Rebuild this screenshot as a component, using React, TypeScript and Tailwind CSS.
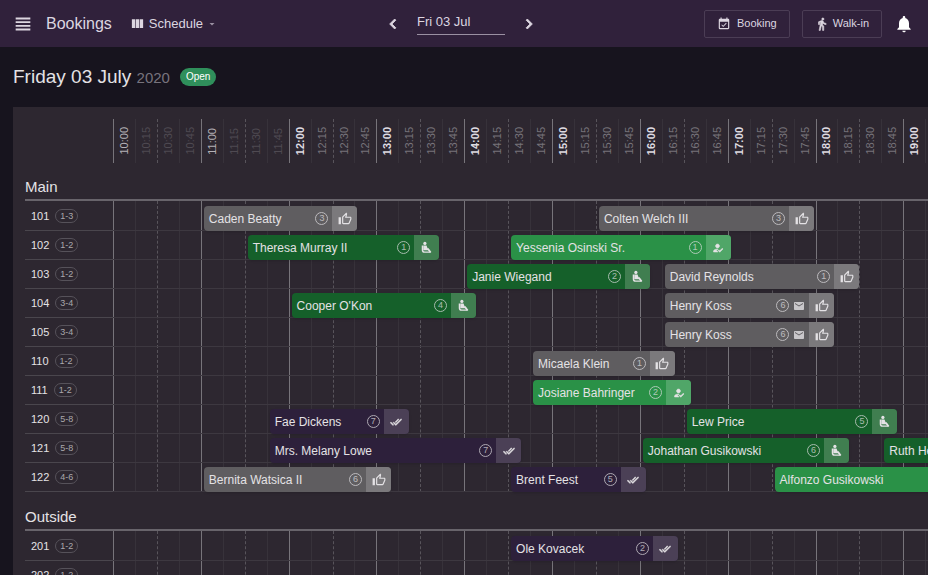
import React from "react";
import {
  MdArrowDropDown,
  MdChevronLeft,
  MdChevronRight,
  MdDirectionsWalk,
  MdDoneAll,
  MdEmail,
  MdEventAvailable,
  MdHowToReg,
  MdNotifications,
  MdOutlineThumbUp,
  MdViewColumn,
  MdViewHeadline,
} from "react-icons/md";

type Status = "confirmed" | "seated" | "arrived" | "finished";

type Booking = {
  name: string;
  start: string;
  minutes: number;
  guests: number;
  status: Status;
  mail?: boolean;
};

type TableRow = { table: string; seats: string; bookings: Booking[] };

const OPENING_HOUR = 10;
const HOURS = 10;
const slots = Array.from({ length: HOURS * 4 }, (_, i) => i);

const sections: { title: string; rows: TableRow[] }[] = [
  {
    title: "Main",
    rows: [
      {
        table: "101",
        seats: "1-3",
        bookings: [
          { name: "Caden Beatty", start: "11:00", minutes: 105, guests: 3, status: "confirmed" },
          { name: "Colten Welch III", start: "15:30", minutes: 147, guests: 3, status: "confirmed" },
        ],
      },
      {
        table: "102",
        seats: "1-2",
        bookings: [
          { name: "Theresa Murray II", start: "11:30", minutes: 131, guests: 1, status: "seated" },
          { name: "Yessenia Osinski Sr.", start: "14:30", minutes: 150, guests: 1, status: "arrived" },
        ],
      },
      {
        table: "103",
        seats: "1-2",
        bookings: [
          { name: "Janie Wiegand", start: "14:00", minutes: 125, guests: 2, status: "seated" },
          { name: "David Reynolds", start: "16:15", minutes: 133, guests: 1, status: "confirmed" },
        ],
      },
      {
        table: "104",
        seats: "3-4",
        bookings: [
          { name: "Cooper O'Kon", start: "12:00", minutes: 126, guests: 4, status: "seated" },
          { name: "Henry Koss", start: "16:15", minutes: 116, guests: 6, status: "confirmed", mail: true },
        ],
      },
      {
        table: "105",
        seats: "3-4",
        bookings: [
          { name: "Henry Koss", start: "16:15", minutes: 116, guests: 6, status: "confirmed", mail: true },
        ],
      },
      {
        table: "110",
        seats: "1-2",
        bookings: [
          { name: "Micaela Klein", start: "14:45", minutes: 97, guests: 1, status: "confirmed" },
        ],
      },
      {
        table: "111",
        seats: "1-2",
        bookings: [
          { name: "Josiane Bahringer", start: "14:45", minutes: 108, guests: 2, status: "arrived" },
        ],
      },
      {
        table: "120",
        seats: "5-8",
        bookings: [
          { name: "Fae Dickens", start: "11:45", minutes: 95, guests: 7, status: "finished" },
          { name: "Lew Price", start: "16:30", minutes: 144, guests: 5, status: "seated" },
        ],
      },
      {
        table: "121",
        seats: "5-8",
        bookings: [
          { name: "Mrs. Melany Lowe", start: "11:45", minutes: 172, guests: 7, status: "finished" },
          { name: "Johathan Gusikowski", start: "16:00", minutes: 141, guests: 6, status: "seated" },
          { name: "Ruth Heller", start: "18:45", minutes: 75, guests: 2, status: "seated" },
        ],
      },
      {
        table: "122",
        seats: "4-6",
        bookings: [
          { name: "Bernita Watsica II", start: "11:00", minutes: 128, guests: 6, status: "confirmed" },
          { name: "Brent Feest", start: "14:30", minutes: 92, guests: 5, status: "finished" },
          { name: "Alfonzo Gusikowski", start: "17:30", minutes: 150, guests: 4, status: "arrived" },
        ],
      },
    ],
  },
  {
    title: "Outside",
    rows: [
      {
        table: "201",
        seats: "1-2",
        bookings: [
          { name: "Ole Kovacek", start: "14:30", minutes: 114, guests: 2, status: "finished" },
        ],
      },
      { table: "202", seats: "1-2", bookings: [] },
    ],
  },
];

// the md icons carry an unfilled bounding path, which must not be stroked
const boldIcon = "stroke-current stroke-1 [&>[fill=none]]:hidden";

const SeatedIcon = () => (
  <svg viewBox="0 0 24 24" className="size-[13px]" fill="currentColor">
    <circle cx="9" cy="4.5" r="3" />
    <path d="M6 8.500h6l2 5h2l5 7-2.500 1.500-4-5H6z" />
    <path d="M4.500 8.500v8a4 4 0 0 0 4 4H19" fill="none" stroke="currentColor" strokeWidth="2.600" />
  </svg>
);

const statuses = {
  confirmed: {
    bar: "bg-[#5f5d60]",
    tag: "bg-[#7b797c]",
    icon: <MdOutlineThumbUp size={14} />,
  },
  seated: { bar: "bg-[#15602a]", tag: "bg-[#407e50]", icon: <SeatedIcon /> },
  arrived: {
    bar: "bg-[#2a9147]",
    tag: "bg-[#50a668]",
    icon: <MdHowToReg size={12} className={boldIcon} />,
  },
  finished: {
    bar: "bg-[#2d203b]",
    tag: "bg-[#4b4056]",
    icon: <MdDoneAll size={12} className={boldIcon} />,
  },
};

const percent = (minutes: number) => `${(minutes / (HOURS * 60)) * 100}%`;

const offset = (start: string) => {
  const [hours, minutes] = start.split(":").map(Number);
  return percent((hours - OPENING_HOUR) * 60 + minutes);
};

const slotLabel = (slot: number) =>
  `${OPENING_HOUR + Math.floor(slot / 4)}:${String((slot % 4) * 15).padStart(2, "0")}`;

const slotText = (slot: number) => {
  if (slot % 4 === 0) {
    return slot < 8 ? "text-[#b4b1b6]" : "font-bold text-[#dedbe0]";
  }
  return slot < 8 ? "text-[#4f4a52]" : "text-[#77737a]";
};

const slotLine = (slot: number) => {
  if (slot % 4 === 0) return "border-[#77747a]";
  if (slot % 4 === 2) return "border-dashed border-[#58545b]";
  return "border-[#37323a]";
};

const Header = () => {
  return (
    <header className="flex h-[47px] shrink-0 items-center justify-between bg-[#30213b] pr-3.5 pl-3 text-[#dcd6e0]">
      <div className="flex flex-1 items-center">
        <button aria-label="Menu">
          <MdViewHeadline size={22} />
        </button>
        <h1 className="ml-3 text-base">Bookings</h1>
        <label className="ml-[18px] flex items-center text-[13px]">
          <MdViewColumn size={15} />
          <select
            aria-label="View"
            className="ml-1 appearance-none bg-transparent outline-none"
          >
            <option>Schedule</option>
          </select>
          <MdArrowDropDown size={12} className="ml-0.5 text-[#9a90a2]" />
        </label>
      </div>
      <div className="mr-1 flex items-center">
        <button aria-label="Previous day">
          <MdChevronLeft size={20} className={boldIcon} />
        </button>
        <input
          aria-label="Date"
          defaultValue="Fri 03 Jul"
          className="mx-3.5 h-[22px] w-[88px] border-b border-[#9a90a2] bg-transparent pb-1 text-[13px] outline-none"
        />
        <button aria-label="Next day">
          <MdChevronRight size={20} className={boldIcon} />
        </button>
      </div>
      <div className="flex flex-1 items-center justify-end text-[11px]">
        <button className="flex h-7 items-center gap-1.5 rounded-xs border border-[#4b3d55] px-3">
          <MdEventAvailable size={14} />
          Booking
        </button>
        <button className="ml-3 flex h-7 items-center gap-1 rounded-xs border border-[#4b3d55] px-3">
          <MdDirectionsWalk size={14} className={boldIcon} />
          Walk-in
        </button>
        <button aria-label="Notifications" className="ml-3 text-white">
          <MdNotifications size={20} />
        </button>
      </div>
    </header>
  );
};

const BookingBar = ({ booking }: { booking: Booking }) => {
  const { name, start, minutes, guests, status, mail } = booking;
  const { bar, tag, icon } = statuses[status];

  return (
    <button
      className={`absolute bottom-0 ml-[3px] flex h-[25px] items-center overflow-hidden rounded-[4px] text-[#e4e2e5] shadow-sm ${bar}`}
      style={{ left: offset(start), width: percent(minutes) }}
    >
      <span className="flex-1 truncate pl-[5px] text-left text-xs">{name}</span>
      <span className="mr-1 flex size-[13px] items-center justify-center rounded-full border border-current text-[9px] leading-none opacity-70">
        {guests}
      </span>
      {mail && <MdEmail size={12} className="mr-1 opacity-80" />}
      <span className={`flex h-full w-[25px] items-center justify-center ${tag}`}>
        {icon}
      </span>
    </button>
  );
};

const TimeHeader = () => {
  return (
    <div className="flex h-11 w-[878px] shrink-0">
      {slots.map((slot) => (
        <div
          key={slot}
          className={`flex flex-1 items-center justify-center border-l ${slotLine(slot)}`}
        >
          <span
            className={`rotate-180 text-[11px] leading-none [writing-mode:vertical-rl] ${slotText(slot)}`}
          >
            {slotLabel(slot)}
          </span>
        </div>
      ))}
    </div>
  );
};

const Section = ({ title, rows }: { title: string; rows: TableRow[] }) => {
  return (
    <section className="mb-[13px]">
      <h3 className="py-1 text-[15px] leading-4">{title}</h3>
      <div className="flex border-t-2 border-[#68646b]">
        <div className="w-[88px] shrink-0 pt-px">
          {rows.map(({ table, seats }) => (
            <div
              key={table}
              className="flex h-[29px] items-center gap-1.5 border-b border-[#4a464d] pl-1.5 text-[11px]"
            >
              {table}
              <span className="rounded-full border border-[#56525a] px-1 text-[9px] leading-3 text-[#aaa7ac]">
                {seats}
              </span>
            </div>
          ))}
        </div>
        <div className="relative w-[878px] shrink-0 pt-px">
          <div className="absolute inset-0 flex">
            {slots.map((slot) => (
              <div key={slot} className={`flex-1 border-l ${slotLine(slot)}`} />
            ))}
          </div>
          {rows.map(({ table, bookings }) => (
            <div key={table} className="relative h-[29px] shadow-[inset_0_-1px_#3d3840]">
              {bookings.map((booking) => (
                <BookingBar key={booking.start} booking={booking} />
              ))}
            </div>
          ))}
        </div>
      </div>
    </section>
  );
};

const App = () => {
  return (
    <div className="flex h-screen flex-col overflow-hidden bg-[#17141e] font-['Liberation_Sans',sans-serif] text-[#e4e2e5]">
      <Header />
      <main className="flex min-h-0 flex-1 flex-col pl-[13px]">
        <div className="flex h-[60px] shrink-0 items-center">
          <h2 className="text-[19px]">
            Friday 03 July <span className="text-[15px] text-[#77737d]">2020</span>
          </h2>
          <span className="ml-2.5 rounded-full bg-[#2f8f5b] px-1.5 text-[10px] leading-[18px] text-white">
            Open
          </span>
        </div>
        <div className="min-h-0 flex-1 overflow-auto bg-[#2d2730] pt-3 pl-3 [scrollbar-width:none]">
          <div className="w-max">
            <div className="mb-3 pl-[88px]">
              <TimeHeader />
            </div>
            {sections.map((section) => (
              <Section key={section.title} {...section} />
            ))}
          </div>
        </div>
      </main>
    </div>
  );
};

export default App;
